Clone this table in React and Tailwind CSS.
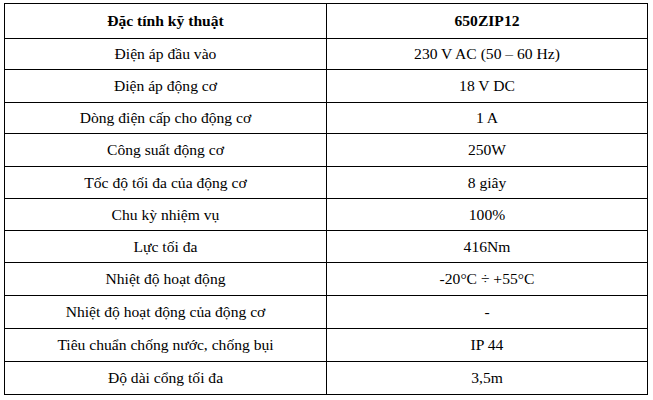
import React from "react";

const rows = [
  ["Điện áp đầu vào", "230 V AC (50 – 60 Hz)", "h-[31px]"],
  ["Điện áp động cơ", "18 V DC", "h-[33px]"],
  ["Dòng điện cấp cho động cơ", "1 A", "h-[31px]"],
  ["Công suất động cơ", "250W", "h-[33px]"],
  ["Tốc độ tối đa của động cơ", "8 giây", "h-[32px]"],
  ["Chu kỳ nhiệm vụ", "100%", "h-[32px]"],
  ["Lực tối đa", "416Nm", "h-[32px]"],
  ["Nhiệt độ hoạt động", "-20°C ÷ +55°C", "h-[33px]"],
  ["Nhiệt độ hoạt động của động cơ", "-", "h-[33px]"],
  ["Tiêu chuẩn chống nước, chống bụi", "IP 44", "h-[33px]"],
  ["Độ dài cổng tối đa", "3,5m", "h-[33px]"],
];

export default function App() {
  return (
    <div
      className="w-[653px] h-[400px] bg-white text-black pt-[3px] pl-[4px]"
      style={{ fontFamily: '"Liberation Serif", "Times New Roman", serif' }}
    >
      <div className="w-[644px] border border-black text-[15.6px] leading-none">
        <div className="flex h-[34px] font-bold">
          <div className="w-[322px] border-r border-black flex items-center justify-center">
            Đặc tính kỹ thuật
          </div>
          <div className="flex-1 flex items-center justify-center">650ZIP12</div>
        </div>
        {rows.map(([a, b, h], i) => (
          <div key={i} className={`flex border-t border-black ${h}`}>
            <div className="w-[322px] border-r border-black flex items-center justify-center">
              {a}
            </div>
            <div className="flex-1 flex items-center justify-center">{b}</div>
          </div>
        ))}
      </div>
    </div>
  );
}
